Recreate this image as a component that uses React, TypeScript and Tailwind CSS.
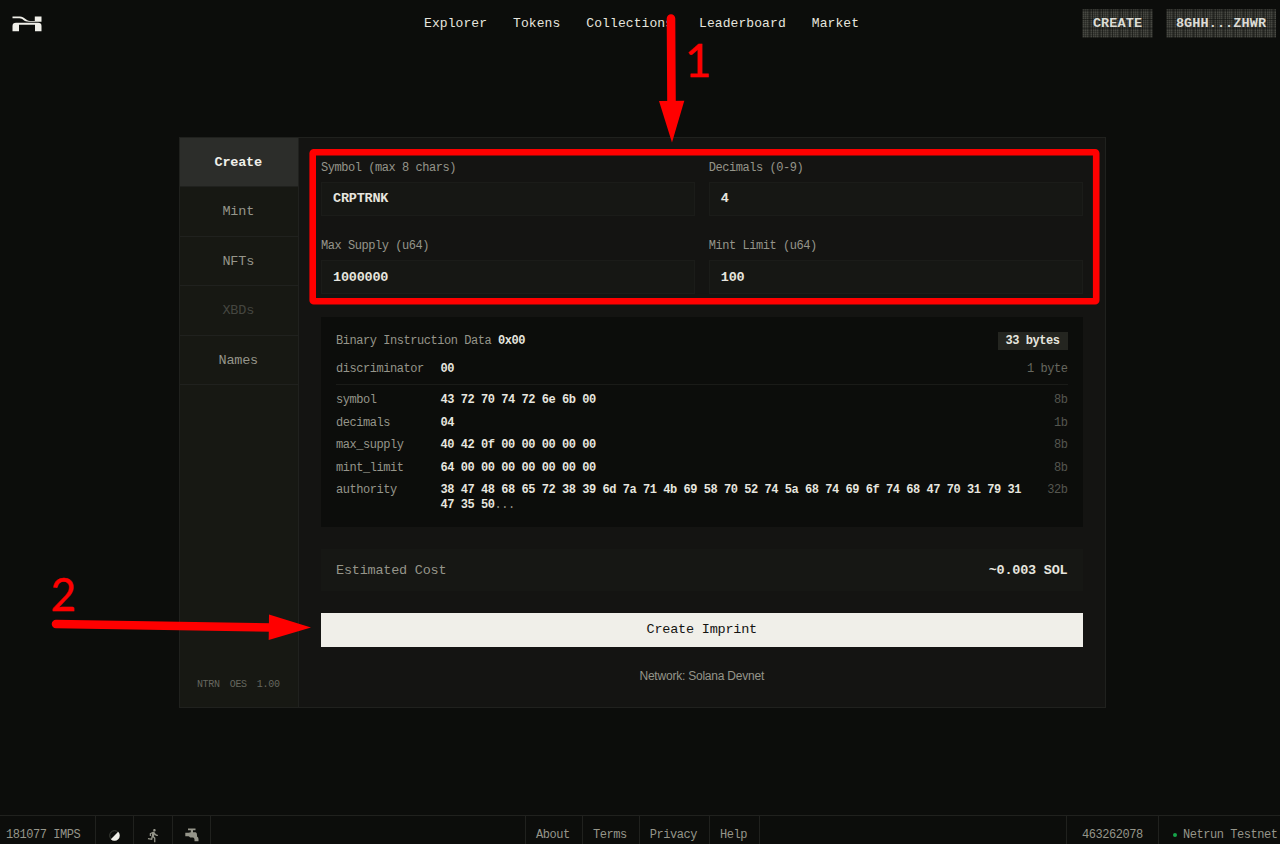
import React from "react";
import { MdDirectionsRun } from "react-icons/md";

const NAV = ["Explorer", "Tokens", "Collections", "Leaderboard", "Market"];

const TABS = [
  { label: "Create", cls: "bg-[#2c2d2a] text-[#f0efe9] font-bold" },
  { label: "Mint", cls: "text-[#95958a]" },
  { label: "NFTs", cls: "text-[#95958a]" },
  { label: "XBDs", cls: "text-[#454640]" },
  { label: "Names", cls: "text-[#95958a]" },
];

const FIELDS = [
  { label: "Symbol (max 8 chars)", value: "CRPTRNK" },
  { label: "Decimals (0-9)", value: "4" },
  { label: "Max Supply (u64)", value: "1000000" },
  { label: "Mint Limit (u64)", value: "100" },
];

const ROWS = [
  { name: "symbol", bytes: "43 72 70 74 72 6e 6b 00", size: "8b" },
  { name: "decimals", bytes: "04", size: "1b" },
  { name: "max_supply", bytes: "40 42 0f 00 00 00 00 00", size: "8b" },
  { name: "mint_limit", bytes: "64 00 00 00 00 00 00 00", size: "8b" },
];

const small = "text-[12px] tracking-[-0.45px]";
const medium = "text-[13.5px] tracking-[-0.22px]";

function Logo() {
  return (
    <svg className="h-[16px] w-[30px]" viewBox="0 0 30 16" fill="#f0efe9">
      <path d="M0.500 0.400H8C12.500 0.400 14 4.900 18 4.900H22.800V0.400H29.500V5.700H17C11.500 5.700 11 2.200 7.500 2.200H0.500Z" />
      <path d="M4 6.700H26Q29.500 6.700 29.500 10V15.200H23V8.800H7V15.200H0.500V10Q0.500 6.700 4 6.700Z" />
    </svg>
  );
}

function Faucet() {
  return (
    <svg className="h-[14px] w-[14px]" viewBox="0 0 14 14" fill="#95958a">
      <path d="M3 0.500H10.500V2.300H8V4.300H10.500Q12 4.600 12 7V8.500Q13.500 9 13.500 11V13.300H9.500V11.500Q9.300 9.800 8 9.600H5.200Q4.500 8.500 3.500 8.300H0.300V4.800H3.500L5.800 4.300V2.300H3Z" />
    </svg>
  );
}

function DitherButton({ children, className }: { children: React.ReactNode; className: string }) {
  return (
    <button
      className={`flex h-[29px] items-center justify-center bg-[#474842] bg-[image:repeating-linear-gradient(90deg,#0c0d0b66_0_1px,transparent_1px_7px,#0c0d0b88_7px_8px,transparent_8px_10px),repeating-linear-gradient(90deg,#0c0d0b55_0_1px,transparent_1px_2px),repeating-linear-gradient(0deg,#0c0d0b44_0_1px,transparent_1px_2px),repeating-linear-gradient(0deg,#0c0d0b77_0_1px,transparent_1px_9px)] pt-[1px] text-[13.5px] font-bold tracking-[0.100px] text-[#dddcd6] ${className}`}
    >
      {children}
    </button>
  );
}

function Annotations() {
  return (
    <svg className="pointer-events-none absolute inset-0 h-[844px] w-[1280px]" viewBox="0 0 1280 844">
      <rect x="312.7" y="152.200" width="783.500" height="149" rx="1" fill="none" stroke="#ff0000" strokeWidth="6.600" strokeLinejoin="round" />
      <path d="M671 18.500L671.500 104" stroke="#ff0000" strokeWidth="8.600" strokeLinecap="round" />
      <path d="M659 101L684.300 100.700L672 142.500Z" fill="#ff0000" />
      <path d="M56 624L272 627.500" stroke="#ff0000" strokeWidth="8.600" strokeLinecap="round" />
      <path d="M269 614.500L311 627.500L268.700 640Z" fill="#ff0000" />
      <g fill="#ff0000" stroke="#ff0000" strokeWidth="0.400" className="font-['Lato',sans-serif] text-[46.5px]">
        <text transform="translate(684.800 77) scale(0.990 1)">1</text>
        <text transform="translate(50.500 610.500) scale(0.950 1)">2</text>
      </g>
    </svg>
  );
}

export default function App() {
  return (
    <div className="relative flex h-[844px] w-[1280px] flex-col overflow-hidden bg-[#0c0d0b] font-['Liberation_Mono',monospace] text-[#95958a]">
      <header className="grid h-[47px] shrink-0 grid-cols-[412px_1fr_412px] items-center">
        <div className="pl-[12px]">
          <Logo />
        </div>
        <nav className="flex gap-[26px] pl-[12px] pt-[1px] text-[13px] tracking-[0.080px] text-[#e6e5df]">
          {NAV.map((n) => (
            <a key={n}>{n}</a>
          ))}
        </nav>
        <div className="flex justify-end gap-[13px] pr-[4px]">
          <DitherButton className="w-[71px]">CREATE</DitherButton>
          <DitherButton className="w-[110px]">8GHH...ZHWR</DitherButton>
        </div>
      </header>

      <main className="ml-[178.500px] mt-[89.500px] flex h-[571px] w-[927px] shrink-0 border border-[#20211e] bg-[#141412]">
        <aside className="flex w-[119.500px] shrink-0 flex-col border-r border-[#20211e] bg-[#171813]">
          {TABS.map((t) => (
            <button
              key={t.label}
              className={`flex h-[49.500px] shrink-0 items-center justify-center border-b border-[#20211e] pr-[1px] pt-[2px] ${medium} ${t.cls}`}
            >
              {t.label}
            </button>
          ))}
          <div className="mt-auto flex justify-center gap-[10px] pb-[15px] pr-[1px] text-[10px] leading-[14px] tracking-[-0.300px] text-[#66675f]">
            <span>NTRN</span>
            <span>OES</span>
            <span>1.00</span>
          </div>
        </aside>

        <section className="flex flex-1 flex-col px-[22px] pt-[22px]">
          <div className="grid grid-cols-2 gap-x-[14px] gap-y-[22.500px]">
            {FIELDS.map((f) => (
              <label key={f.label} className="flex flex-col">
                <span className={`h-[22px] leading-[16px] ${small}`}>{f.label}</span>
                <span className={`flex h-[34px] items-center border border-[#1b1c19] bg-[#161714] px-[11px] pt-[2px] font-bold text-[#e6e5df] ${medium}`}>
                  {f.value}
                </span>
              </label>
            ))}
          </div>

          <div className={`mt-[23px] h-[210px] bg-[#0c0d0b] px-[15px] pt-[15px] ${small}`}>
            <div className="flex h-[18px] items-center justify-between">
              <span>
                Binary Instruction Data <b className="text-[#e6e5df]">0x00</b>
              </span>
              <b className="flex h-[18px] w-[70px] items-center justify-center bg-[#242520] text-[#e6e5df]">33 bytes</b>
            </div>
            <div className="mt-[8px] flex h-[27px] border-b border-[#1a1b18] leading-[23px]">
              <span className="w-[104.500px]">discriminator</span>
              <b className="text-[#e6e5df]">00</b>
              <span className="ml-auto text-[#66675f]">1 byte</span>
            </div>
            <div className="mt-[4px] flex flex-col">
              {ROWS.map((r) => (
                <div key={r.name} className="flex h-[22.500px] leading-[22.500px]">
                  <span className="w-[104.500px]">{r.name}</span>
                  <b className="text-[#e6e5df]">{r.bytes}</b>
                  <span className="ml-auto text-[#55564f]">{r.size}</span>
                </div>
              ))}
              <div className="flex pt-[4px] leading-[15px]">
                <span className="w-[104.500px] shrink-0">authority</span>
                <span className="w-[590px] text-[#e6e5df]">
                  <b>
                    38 47 48 68 65 72 38 39 6d 7a 71 4b 69 58 70 52 74 5a 68 74 69 6f 74 68 47 70 31 79 31
                    <br />
                    47 35 50
                  </b>
                  <span className="text-[#95958a]">...</span>
                </span>
                <span className="ml-auto text-[#55564f]">32b</span>
              </div>
            </div>
          </div>

          <div className={`mt-[22px] flex h-[42px] items-center justify-between bg-[#161714] px-[15px] pt-[2px] ${medium}`}>
            <span>Estimated Cost</span>
            <b className="text-[#e6e5df]">~0.003 SOL</b>
          </div>

          <button className={`mt-[22px] flex h-[34px] items-center justify-center bg-[#f0efe9] pt-[1px] text-[#141412] ${medium}`}>
            Create Imprint
          </button>

          <p className="mt-[20px] text-center font-['Liberation_Sans',sans-serif] text-[12px] leading-[18px] tracking-[-0.220px]">
            Network: Solana Devnet
          </p>
        </section>
      </main>

      <footer className={`mt-[107px] flex h-[40px] shrink-0 border-t border-[#20211e] ${small}`}>
        <div className="flex w-[96px] items-center border-r border-[#20211e] pl-[6px]">181077 IMPS</div>
        <div className="flex w-[38px] items-center justify-center border-r border-[#20211e]">
          <svg className="size-[11px]" viewBox="0 0 11 11">
            <circle cx="5.500" cy="5.500" r="4.800" fill="none" stroke="#55564f" strokeWidth="0.700" />
            <path d="M9.200 1.800A5.200 5.200 0 0 1 1.800 9.200Z" fill="#f0efe9" />
          </svg>
        </div>
        <div className="flex w-[39px] items-center justify-center border-r border-[#20211e]">
          <MdDirectionsRun size={15} />
        </div>
        <div className="flex w-[38px] items-center justify-center border-r border-[#20211e]">
          <Faucet />
        </div>
        <div className="flex-1" />
        <div className="flex w-[58px] items-center justify-center border-x border-[#20211e] pr-[2px]">About</div>
        <div className="flex w-[57px] items-center justify-center border-r border-[#20211e] pr-[2px]">Terms</div>
        <div className="flex w-[70px] items-center justify-center border-r border-[#20211e] pr-[2px]">Privacy</div>
        <div className="flex w-[50px] items-center justify-center border-r border-[#20211e] pr-[2px]">Help</div>
        <div className="w-[306px]" />
        <div className="flex w-[93px] items-center justify-center border-x border-[#20211e]">463262078</div>
        <div className="flex w-[121px] items-center justify-end gap-[6px] pr-[2.500px]">
          <span className="size-[4px] rounded-full bg-[#16a34a]" />
          <span>Netrun Testnet</span>
        </div>
      </footer>

      <Annotations />
    </div>
  );
}
